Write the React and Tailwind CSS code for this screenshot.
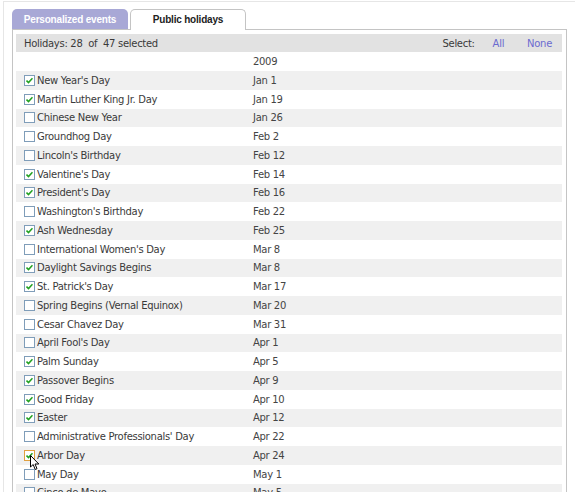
import React, { useState } from 'react';

const holidays = [
  { name: "New Year's Day", date: 'Jan 1', on: true },
  { name: 'Martin Luther King Jr. Day', date: 'Jan 19', on: true },
  { name: 'Chinese New Year', date: 'Jan 26', on: false },
  { name: 'Groundhog Day', date: 'Feb 2', on: false },
  { name: "Lincoln's Birthday", date: 'Feb 12', on: false },
  { name: "Valentine's Day", date: 'Feb 14', on: true },
  { name: "President's Day", date: 'Feb 16', on: true },
  { name: "Washington's Birthday", date: 'Feb 22', on: false },
  { name: 'Ash Wednesday', date: 'Feb 25', on: true },
  { name: "International Women's Day", date: 'Mar 8', on: false },
  { name: 'Daylight Savings Begins', date: 'Mar 8', on: true },
  { name: "St. Patrick's Day", date: 'Mar 17', on: true },
  { name: 'Spring Begins (Vernal Equinox)', date: 'Mar 20', on: false },
  { name: 'Cesar Chavez Day', date: 'Mar 31', on: false },
  { name: "April Fool's Day", date: 'Apr 1', on: false },
  { name: 'Palm Sunday', date: 'Apr 5', on: true },
  { name: 'Passover Begins', date: 'Apr 9', on: true },
  { name: 'Good Friday', date: 'Apr 10', on: true },
  { name: 'Easter', date: 'Apr 12', on: true },
  { name: "Administrative Professionals' Day", date: 'Apr 22', on: false },
  { name: 'Arbor Day', date: 'Apr 24', on: true, hover: true },
  { name: 'May Day', date: 'May 1', on: false },
  { name: 'Cinco de Mayo', date: 'May 5', on: false },
];

// XP style little checkbox
function Box({ checked, hover }) {
  return (
    <span
      className={
        'relative flex h-[11px] w-[11px] shrink-0 items-center justify-center border bg-white ' +
        (hover ? 'border-[#e0a040] bg-[#fff4d8]' : 'border-[#7f9db9]')
      }
    >
      {checked && (
        <svg width="7" height="7" viewBox="0 0 7 7">
          <path d="M0.5 3.5 L2.5 5.5 L6.5 1.2" fill="none" stroke="#21a121" strokeWidth="1.6" />
        </svg>
      )}
      {hover && (
        <svg className="absolute left-[5px] top-[4px]" width="10" height="16" viewBox="0 0 10 16">
          <path d="M0.5 0.5 L0.5 12 L3.2 9.5 L5.2 14.5 L7 13.7 L5 9 L8.8 9 Z" fill="white" stroke="black" strokeWidth="1" />
        </svg>
      )}
    </span>
  );
}

export default function App() {
  const [list, setList] = useState(holidays);
  const selected = 28;

  const toggle = (i) => {
    setList(list.map((h, idx) => (idx === i ? { ...h, on: !h.on } : h)));
  };

  return (
    <div
      className="h-[492px] w-[575px] overflow-hidden bg-white pl-[3px] pt-px text-[10px] tracking-[-0.3px] text-[#3a3a3a]"
      style={{ fontFamily: '"DejaVu Sans", Verdana, sans-serif' }}
    >
      <div className="h-full border-l border-t border-[#e6e6e6] pl-[8px] pt-[7px]">
        {/* Tabs */}
        <div className="relative z-10 flex gap-[2px]">
          <div
            className="flex h-[20px] w-[116px] items-center justify-center rounded-t-[5px] bg-[#a8a8d6] pt-px text-[10px] font-bold tracking-[-0.2px] text-white"
            style={{ fontFamily: '"Liberation Sans", Arial, sans-serif' }}
          >
            Personalized events
          </div>
          <div
            className="-mb-px flex h-[21px] w-[116px] items-center justify-center rounded-t-[5px] border border-b-0 border-[#c4c4c4] bg-white pb-px text-[10px] font-bold tracking-[-0.2px] text-[#222]"
            style={{ fontFamily: '"Liberation Sans", Arial, sans-serif' }}
          >
            Public holidays
          </div>
        </div>

        {/* Panel */}
        <div className="w-[555px] border border-[#c4c4c4] pl-[3px] pr-[4px] pt-[4px]">
          <div className="flex h-[18px] items-center bg-[#e2e2e2] pl-[8px] pr-[10px]">
            <span className="whitespace-pre">Holidays: {selected}  of  {list.length + 24} selected</span>
            <span className="ml-auto">Select:</span>
            <button className="ml-[18px] text-[#6b6bd0]">All</button>
            <button className="ml-[23px] text-[#6b6bd0]">None</button>
          </div>

          <div className="flex h-[19px] items-center pl-[237px] text-[#444]">2009</div>

          {list.map((h, i) => (
            <div
              key={h.name}
              onClick={() => toggle(i)}
              className={'flex h-[18.75px] cursor-default items-center ' + (i % 2 === 0 ? 'bg-[#f0f0f0]' : 'bg-white')}
            >
              <span className="ml-[8px]">
                <Box checked={h.on} hover={h.hover} />
              </span>
              <span className="ml-[2px] w-[216px] truncate">{h.name}</span>
              <span className="text-[#444]">{h.date}</span>
            </div>
          ))}
        </div>
      </div>
    </div>
  );
}
